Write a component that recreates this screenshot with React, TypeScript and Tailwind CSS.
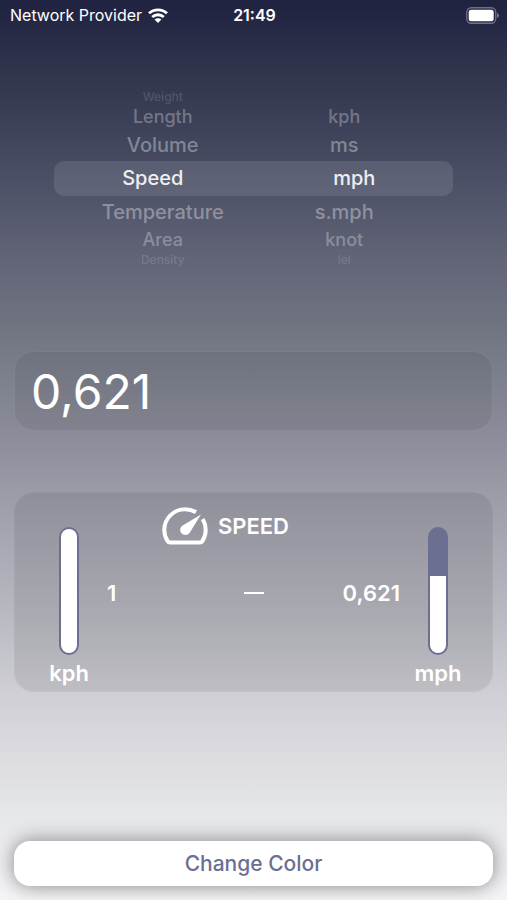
import { useState } from "react";
import clsx from "clsx";

const categories = ["Weight", "Length", "Volume", "Speed", "Temperature", "Area", "Density"];
const units = ["", "kph", "ms", "mph", "s.mph", "knot", "lel"];

// the wheel rows get smaller and fainter away from the middle
const rowStyles = [
  "h-4 px-5 text-[12px] leading-4 text-white/15",
  "h-6 px-5 text-[18px] leading-6 text-white/30",
  "h-8 px-5 text-[20px] leading-8 text-white/35",
  "h-[35px] text-[20px] leading-[35px] text-white/90 bg-white/10 rounded-[10px]",
  "h-8 px-5 text-[20px] leading-8 text-white/35",
  "h-6 px-5 text-[18px] leading-6 text-white/30",
  "h-4 px-5 text-[12px] leading-4 text-white/15",
];

const WifiIcon = () => (
  <svg viewBox="0 0 20 15" className="w-5 h-[15px]" fill="none" stroke="white" strokeWidth="2.8">
    <path d="M1 5.300C6 .7 14 .7 19 5.300" />
    <path d="M4.200 9c3.300-3 8.300-3 11.600 0" />
    <path d="M10 15 6.600 11.600c1.900-1.700 4.900-1.700 6.800 0z" fill="white" stroke="none" />
  </svg>
);

const BatteryIcon = () => (
  <svg viewBox="0 0 33 17" className="w-[33px] h-[17px]">
    <rect x="0.75" y="0.75" width="29" height="15.500" rx="4.500" fill="none" stroke="white" strokeOpacity=".35" strokeWidth="1.300" />
    <rect x="2.700" y="2.800" width="25" height="11.400" rx="2.500" fill="white" />
    <path d="M31.200 6v5c1-.4 1.600-1.300 1.600-2.500S32.200 6.400 31.200 6z" fill="white" fillOpacity=".45" />
  </svg>
);

const GaugeIcon = () => (
  <svg viewBox="0 0 46 38" className="w-[46px] h-[38px]">
    <path
      d="M34 5.200C30.800 3.300 27 2.300 23 2.300 11.500 2.300 2.300 11.500 2.300 23c0 4.100 1.200 8 3.300 11.200Q6.500 35.600 8.200 35.600H37.800Q39.500 35.600 40.400 34.200C42.500 31 43.700 27.100 43.700 23c0-4-1.100-7.700-3-10.900"
      fill="none"
      stroke="white"
      strokeWidth="4"
    />
    <path d="M39 7.400 28 25.200C26.200 28.300 22.200 29 19.800 26.600c-2.400-2.300-2-6.200.8-8.200z" fill="white" />
  </svg>
);

interface MeterProps {
  label: string;
  value: number;
}

const Meter = ({ label, value }: MeterProps) => (
  <div className="w-16 flex flex-col items-center gap-1">
    <div
      className="w-5 h-32 p-0.5 rounded-full bg-[#6b6f92] overflow-hidden flex flex-col justify-end"
      role="meter"
      aria-label={label}
      aria-valuenow={value}
    >
      <div
        className={clsx("bg-white rounded-b-full", value === 1 && "rounded-t-full")}
        style={{ height: `${value * 100}%` }}
      />
    </div>
    <span className="text-[22px] leading-7 font-semibold">{label}</span>
  </div>
);

const App = () => {
  const [category, setCategory] = useState("Speed");
  const [unit, setUnit] = useState("mph");
  const [amount, setAmount] = useState("0,621");

  return (
    <div className="min-h-screen flex flex-col font-['Inter','Liberation_Sans',sans-serif] text-white bg-[linear-gradient(#1f2240_0%,#2d3049_6%,#363b53_11%,#4b5066_20%,#656779_30%,#737884_38%,#8d8e9b_49%,#999aa6_54%,#b5b6be_67%,#cfcfd5_77%,#e5e6e9_90%,#f5f5f7_100%)]">
      <header className="h-[30px] pl-[10px] pr-2 grid grid-cols-[1fr_auto_1fr] items-center">
        <div className="flex items-center gap-1.5">
          <span className="text-base">Network Provider</span>
          <WifiIcon />
        </div>
        <time className="text-base font-semibold">21:49</time>
        <div className="flex justify-end">
          <BatteryIcon />
        </div>
      </header>

      <section className="mt-[59px] mx-[54px] flex flex-col" aria-label="Unit picker">
        {rowStyles.map((style, i) => (
          <div
            key={categories[i]}
            className={clsx("grid grid-cols-2 gap-1 font-medium whitespace-nowrap", style)}
          >
            <button onClick={() => setCategory(categories[i])}>{categories[i]}</button>
            {units[i] && <button onClick={() => setUnit(units[i])}>{units[i]}</button>}
          </div>
        ))}
      </section>

      <main className="mt-[83px] mx-3.5 flex flex-col">
        <input
          type="text"
          aria-label="Amount"
          value={amount}
          onChange={(e) => setAmount(e.target.value)}
          className="w-full h-20 px-4 rounded-[20px] bg-black/6 border border-white/8 text-[48px] outline-none"
        />

        <section className="mt-[61px] h-[200px] px-[22px] rounded-[20px] bg-black/8 border border-white/5 flex justify-between">
          <div className="pt-[34px]">
            <Meter label="kph" value={1} />
          </div>
          <div className="flex-1 pt-3.5 flex flex-col">
            <div className="flex items-center justify-center gap-2.5 pr-14">
              <GaugeIcon />
              <h2 className="text-[22px] font-semibold uppercase">{category}</h2>
            </div>
            <div className="mt-8 px-1.5 grid grid-cols-[1fr_auto_1fr] items-center text-[22px] leading-8 font-semibold">
              <span>1</span>
              <span className="w-5 h-0.5 bg-white" />
              <span className="text-right">{amount}</span>
            </div>
          </div>
          <div className="pt-[34px]">
            <Meter label={unit} value={0.621} />
          </div>
        </section>
      </main>

      <footer className="mt-auto px-3.5 pb-3.5">
        <button className="w-full h-[45px] rounded-2xl bg-white text-[#6b6f92] text-[21px] font-medium shadow-[0_0_20px_rgba(0,0,0,0.45)]">
          Change Color
        </button>
      </footer>
    </div>
  );
};

export default App;
